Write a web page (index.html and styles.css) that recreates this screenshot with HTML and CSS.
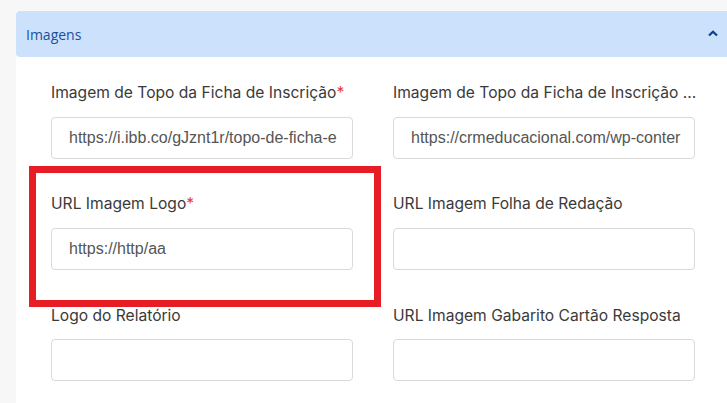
FILE: index.html
```html
<!DOCTYPE html>
<html lang="pt">
<head>
<meta charset="utf-8">
<link rel="stylesheet" href="styles.css">
</head>
<body>
<div class="card">
  <div class="header">
    <span class="title">Imagens</span>
    <svg class="chev" width="10" height="7" viewBox="0 0 10 7"><path d="M1 5.5 L5 1.8 L9 5.5" fill="none" stroke="#0d3d8a" stroke-width="2.2"/></svg>
  </div>
  <div class="body">
    <div class="grid">
      <div class="field">
        <label>Imagem de Topo da Ficha de Inscrição<span class="req">*</span></label>
        <div class="input">https://i.ibb.co/gJznt1r/topo-de-ficha-e</div>
      </div>
      <div class="field">
        <label class="ellipsis">Imagem de Topo da Ficha de Inscrição ...</label>
        <div class="input">https://crmeducacional.com/wp-conter</div>
      </div>
      <div class="field">
        <label>URL Imagem Logo<span class="req">*</span></label>
        <div class="input">https://http/aa</div>
      </div>
      <div class="field">
        <label>URL Imagem Folha de Redação</label>
        <div class="input"></div>
      </div>
      <div class="field">
        <label class="low">Logo do Relatório</label>
        <div class="input"></div>
      </div>
      <div class="field">
        <label class="low">URL Imagem Gabarito Cartão Resposta</label>
        <div class="input"></div>
      </div>
    </div>
  </div>
  <div class="highlight"></div>
</div>
</body>
</html>
```
FILE: styles.css
```css
html, body {
  margin: 0;
  padding: 0;
  width: 727px;
  height: 403px;
  overflow: hidden;
  background: #f7f7f7;
}
.card {
  position: relative;
  margin: 11px 0 0 16px;
  width: 711px;
  height: 400px;
  background: #fff;
}
.header {
  height: 46px;
  background: #cce1fc;
  border-radius: 4px 0 0 4px;
  display: flex;
  align-items: center;
  justify-content: space-between;
  padding: 0 0 0 10px;
}
.title {
  font-family: "Open Sans", sans-serif;
  font-size: 14px;
  color: #1b4f9c;
}
.chev {
  margin-right: 9px;
  margin-top: -2px;
}
.body {
  padding: 26px 0 0 35px;
}
.grid {
  display: grid;
  grid-template-columns: 302px 302px;
  column-gap: 40px;
  row-gap: 35px;
}
.field label {
  display: block;
  font-family: "Inter", "Roboto", sans-serif;
  font-size: 15.6px;
  color: #3a3a3a;
  height: 20px;
  line-height: 20px;
  margin-bottom: 14px;
  white-space: nowrap;
}
.field label.low {
  line-height: 22px;
}
.req {
  color: #e53935;
}
.input {
  box-sizing: border-box;
  height: 42px;
  border: 1px solid #d9d9d9;
  border-radius: 4px;
  padding: 0 17px;
  font-family: "Liberation Sans", Arial, sans-serif;
  font-size: 16px;
  color: #555;
  line-height: 40px;
  white-space: nowrap;
  overflow: hidden;
}
.highlight {
  position: absolute;
  left: 13px;
  top: 155px;
  width: 352px;
  height: 141px;
  box-sizing: border-box;
  border: 7px solid #e71d25;
}
```
